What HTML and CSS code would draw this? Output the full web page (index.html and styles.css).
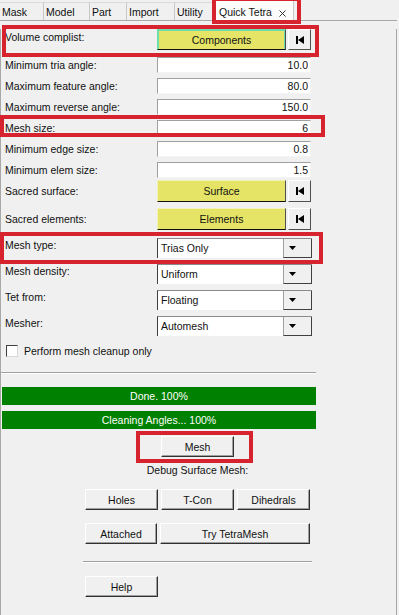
FILE: index.html
```html
<!DOCTYPE html>
<html lang="en">
<head>
  <meta charset="UTF-8">
  <title>Quick Tetra</title>
  <link rel="stylesheet" href="styles.css">
</head>
<body>

<div class="tabs">
  <div class="tab tab-mask">Mask</div>
  <div class="tab tab-model">Model</div>
  <div class="tab tab-part">Part</div>
  <div class="tab tab-import">Import</div>
  <div class="tab tab-utility">Utility</div>
  <div class="tab active mark mark-tab">Quick Tetra
    <svg class="close" width="7" height="7" viewBox="0 0 7 7"><path d="M0.5 0.5L6.5 6.5M6.5 0.5L0.5 6.5" stroke="#222" stroke-width="0.9"/></svg>
  </div>
</div>

<div class="panel">

  <div class="row row-pick row-volume mark mark-volume">
    <label>Volume complist:</label>
    <button class="pick focused">Components</button>
    <button class="rewind"><svg width="8" height="8" viewBox="0 0 8 8"><rect x="0" y="0" width="2" height="8"/><polygon points="8,0 2,4 8,8"/></svg></button>
  </div>

  <div class="row row-input row-first">
    <label>Minimum tria angle:</label>
    <input type="text" class="num" value="10.0">
  </div>
  <div class="row row-input">
    <label>Maximum feature angle:</label>
    <input type="text" class="num" value="80.0">
  </div>
  <div class="row row-input">
    <label>Maximum reverse angle:</label>
    <input type="text" class="num" value="150.0">
  </div>
  <div class="row row-input mark mark-size">
    <label>Mesh size:</label>
    <input type="text" class="num" value="6">
  </div>
  <div class="row row-input">
    <label>Minimum edge size:</label>
    <input type="text" class="num" value="0.8">
  </div>
  <div class="row row-input">
    <label>Minimum elem size:</label>
    <input type="text" class="num" value="1.5">
  </div>

  <div class="row row-pick">
    <label>Sacred surface:</label>
    <button class="pick">Surface</button>
    <button class="rewind"><svg width="8" height="8" viewBox="0 0 8 8"><rect x="0" y="0" width="2" height="8"/><polygon points="8,0 2,4 8,8"/></svg></button>
  </div>
  <div class="row row-pick row-spaced">
    <label>Sacred elements:</label>
    <button class="pick">Elements</button>
    <button class="rewind"><svg width="8" height="8" viewBox="0 0 8 8"><rect x="0" y="0" width="2" height="8"/><polygon points="8,0 2,4 8,8"/></svg></button>
  </div>

  <div class="row row-combo row-combo-first mark mark-type">
    <label>Mesh type:</label>
    <div class="combo"><span>Trias Only</span><div class="arrow"><svg width="7" height="4" viewBox="0 0 7 4"><polygon points="0,0 7,0 3.5,4"/></svg></div></div>
  </div>
  <div class="row row-combo">
    <label>Mesh density:</label>
    <div class="combo"><span>Uniform</span><div class="arrow"><svg width="7" height="4" viewBox="0 0 7 4"><polygon points="0,0 7,0 3.5,4"/></svg></div></div>
  </div>
  <div class="row row-combo">
    <label>Tet from:</label>
    <div class="combo"><span>Floating</span><div class="arrow"><svg width="7" height="4" viewBox="0 0 7 4"><polygon points="0,0 7,0 3.5,4"/></svg></div></div>
  </div>
  <div class="row row-combo">
    <label>Mesher:</label>
    <div class="combo"><span>Automesh</span><div class="arrow"><svg width="7" height="4" viewBox="0 0 7 4"><polygon points="0,0 7,0 3.5,4"/></svg></div></div>
  </div>

  <div class="row row-check">
    <span class="checkbox"></span>
    <span>Perform mesh cleanup only</span>
  </div>

  <div class="separator"></div>

  <div class="progress">Done. 100%</div>
  <div class="progress progress-second">Cleaning Angles... 100%</div>

  <div class="actions">
    <div class="btn-row btn-row-mesh">
      <button class="btn mark mark-mesh">Mesh</button>
    </div>
    <div class="debug-label">Debug Surface Mesh:</div>
    <div class="btn-row">
      <button class="btn">Holes</button>
      <button class="btn">T-Con</button>
      <button class="btn">Dihedrals</button>
    </div>
    <div class="btn-row">
      <button class="btn">Attached</button>
      <button class="btn btn-wide">Try TetraMesh</button>
    </div>
    <div class="separator separator-short"></div>
    <div class="btn-row btn-row-help">
      <button class="btn">Help</button>
    </div>
  </div>

</div>

</body>
</html>
```

FILE: styles.css
```css
body {
  margin: 0;
  background-color: #f0f0f0;
  font-family: "Liberation Sans", Arial, sans-serif;
  font-size: 10.5px;
  color: #111;
  overflow: hidden;
}
button, input {
  font-family: inherit;
  font-size: inherit;
  font-weight: normal;
  color: inherit;
  margin: 0;
  padding: 0;
}

/* tab strip */
.tabs {
  display: flex;
  align-items: flex-end;
  width: 397px;
  height: 20px;
  border-bottom: 1px solid #a8a8a8;
}
.tab {
  box-sizing: border-box;
  height: 18px;
  line-height: 18px;
  padding-left: 2px;
  border-top: 1px solid #dadada;
  border-right: 1px solid #c8c8c8;
  white-space: nowrap;
}
.tab-mask { width: 44px; }
.tab-model { width: 46px; }
.tab-part { width: 37px; }
.tab-import { width: 48px; }
.tab-utility { width: 39px; }
.tab.active {
  width: 80px;
  height: 21px;
  line-height: 23px;
  margin-bottom: -1px;
  padding-left: 4px;
  background: #fcfcfc;
  border: 1px solid #c8c8c8;
  border-bottom: none;
}
.close {
  margin-left: 4px;
  vertical-align: -1px;
}

/* main panel */
.panel {
  box-sizing: border-box;
  width: 397px;
  height: 594px;
  border-left: 1px solid #a8a8a8;
  border-right: 1px solid #a8a8a8;
}
.row {
  display: flex;
  align-items: center;
  padding-left: 4px;
}
.row label {
  width: 152px;
  line-height: 12px;
  white-space: nowrap;
}

.row-pick { height: 22px; }
.row-volume {
  margin-top: 8px;
  height: 21px;
  align-items: stretch;
}
.row-volume label { margin-top: 2px; }
.row-spaced { margin-top: 6px; }
.pick {
  box-sizing: border-box;
  width: 129px;
  height: 100%;
  background: #e5e466;
  border: 1px solid;
  border-color: #f2f1b8 #505050 #101010 #f2f1b8;
}
.pick.focused {
  border-color: #6fdcab #505050 #101010 #6fdcab;
  box-shadow: inset 1px 1px 0 #6fdcab, inset -1px 0 0 #6fdcab;
}
.rewind {
  box-sizing: border-box;
  width: 23px;
  height: 100%;
  margin-left: 2px;
  background: #f0f0f0;
  border: 1px solid;
  border-color: #fff #505050 #505050 #fff;
  display: flex;
  align-items: center;
  justify-content: center;
}

.row-input { height: 21px; }
.row-first { margin-top: 4px; }
.num {
  box-sizing: border-box;
  width: 154px;
  height: 16px;
  padding-right: 2px;
  text-align: right;
  background: #fff;
  border: 1px solid;
  border-color: #a0a0a0 #f4f4f4 #f4f4f4 #a0a0a0;
  outline: none;
}

.row-combo {
  height: 20px;
  margin-top: 6px;
  align-items: flex-start;
}
.row-combo-first { margin-top: 8px; }
.row-combo label { margin-top: 1px; }
.combo {
  box-sizing: border-box;
  display: flex;
  width: 155px;
  height: 20px;
  background: #fff;
  border-top: 1px solid #8a8a8a;
  border-left: 1px solid #404040;
}
.combo span {
  flex: 1;
  padding-left: 3px;
  line-height: 19px;
}
.combo .arrow {
  box-sizing: border-box;
  width: 29px;
  background: #f0f0f0;
  border-left: 1px solid #a0a0a0;
  border-right: 1px solid #404040;
  border-bottom: 1px solid #404040;
  display: flex;
  align-items: center;
  padding-left: 5px;
}

.row-check {
  height: 16px;
  margin-top: 7px;
  padding-left: 5px;
}
.checkbox {
  box-sizing: border-box;
  width: 12px;
  height: 12px;
  margin-right: 6px;
  background: #fff;
  border: 1px solid;
  border-color: #404040 #d8d8d8 #d8d8d8 #404040;
}

.separator {
  width: 315px;
  margin-top: 13px;
  border-top: 1px solid #a0a0a0;
  border-bottom: 1px solid #fff;
}

.progress {
  width: 314px;
  height: 18px;
  line-height: 18px;
  margin: 13px 0 0 1px;
  background: #008000;
  color: #fff;
  text-align: center;
}
.progress-second { margin-top: 6px; }

/* buttons at the bottom */
.actions {
  width: 225px;
  margin: 7px 0 0 84px;
}
.btn-row {
  display: flex;
  gap: 3px;
  margin-top: 13px;
}
.btn-row-mesh {
  margin-top: 0;
  padding-left: 76px;
}
.btn {
  box-sizing: border-box;
  width: 73px;
  height: 21px;
  background: #f0f0f0;
  border: 1px solid;
  border-color: #fff #303030 #303030 #fff;
  box-shadow: inset -1px -1px 0 #a0a0a0;
}
.btn-wide { width: 152px; }
.debug-label {
  margin-top: 7px;
  line-height: 12px;
  text-align: center;
}
.separator-short {
  width: 229px;
  margin: 17px 0 0 -2px;
}
.btn-row-help { margin-top: 13px; }

/* red annotation frames drawn over the screenshot */
.mark { position: relative; }
.mark::after {
  content: "";
  position: absolute;
  box-sizing: border-box;
  border: 4px solid #d7232d;
  pointer-events: none;
}
.mark-tab::after { left: -3px; top: -4px; width: 89px; height: 27px; }
.mark-volume::after { left: 1px; top: -4px; width: 317px; height: 32px; }
.mark-size::after { left: -1px; top: -2px; width: 325px; height: 22px; }
.mark-type::after { left: -1px; top: -6px; width: 323px; height: 32px; }
.mark-mesh::after { left: -26px; top: -6px; width: 117px; height: 32px; }
```
